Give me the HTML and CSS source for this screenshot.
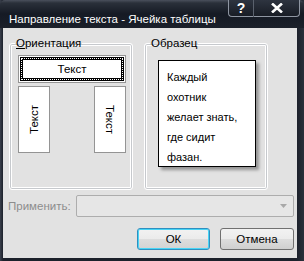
FILE: index.html
```html
<!DOCTYPE html>
<html lang="ru">
<head>
    <meta charset="UTF-8">
    <title>Направление текста - Ячейка таблицы</title>
    <link rel="stylesheet" href="styles.css">
</head>
<body>
    <div class="window">
        <div class="titlebar">
            <span class="title">Направление текста - Ячейка таблицы</span>
            <div class="caption-buttons">
                <div class="cap-btn help">?</div>
                <div class="cap-btn close">
                    <svg width="12" height="10" viewBox="0 0 12 10">
                        <path d="M1 0.5 L11 9.5 M11 0.5 L1 9.5" stroke="#fff" stroke-width="2.6" fill="none"/>
                    </svg>
                </div>
            </div>
        </div>

        <div class="client">
            <div class="groups">
                <fieldset class="group orient">
                    <legend><u>О</u>риентация</legend>
                    <div class="orient-body">
                        <div class="opt-horizontal">
                            <div class="opt-inner">Текст</div>
                        </div>
                        <div class="vertical-row">
                            <div class="opt-vertical up"><span>Текст</span></div>
                            <div class="opt-vertical down"><span>Текст</span></div>
                        </div>
                    </div>
                </fieldset>

                <fieldset class="group sample">
                    <legend>Образец</legend>
                    <div class="sample-box">
                        Каждый<br>охотник<br>желает знать,<br>где сидит<br>фазан.
                    </div>
                </fieldset>
            </div>

            <div class="apply-row">
                <label class="apply-label">Применить:</label>
                <div class="combo">
                    <svg class="combo-arrow" width="7" height="4" viewBox="0 0 7 4">
                        <path d="M0 0 H7 L3.5 4 Z" fill="#a8a8a8"/>
                    </svg>
                </div>
            </div>

            <div class="button-row">
                <button class="btn default">ОК</button>
                <button class="btn">Отмена</button>
            </div>
        </div>
    </div>
</body>
</html>
```

FILE: styles.css
```css
* {
    margin: 0;
    padding: 0;
    box-sizing: border-box;
}

body {
    font-family: 'Liberation Sans', Arial, sans-serif;
    font-size: 11px;
    color: #000;
    background: #1b202a;
}

.window {
    width: 304px;
    height: 261px;
    background: linear-gradient(to right, #3a404c 0, #1c212b 3px, #1c212b 297px, #2a303b 304px);
    display: flex;
    flex-direction: column;
}

.titlebar {
    height: 28px;
    display: flex;
    border-radius: 5px 5px 0 0;
    background: linear-gradient(to bottom, #4a505c 0, #2a303a 3px, #151a24 14px, #1b202a 28px);
}

.title {
    color: #fff;
    font-size: 11.5px;
    padding: 12px 0 0 9px;
    line-height: 14px;
    white-space: nowrap;
}

.caption-buttons {
    display: flex;
    margin-left: auto;
    margin-right: 4px;
    height: 17px;
}

.cap-btn {
    height: 17px;
    border: 1px solid #8f96a2;
    border-top: none;
    background: linear-gradient(to bottom, #2e3440, #181c25);
    color: #fff;
    font-weight: bold;
    font-size: 14px;
    display: flex;
    align-items: center;
    justify-content: center;
}

.help {
    width: 25px;
    border-radius: 0 0 0 4px;
    border-right: none;
}

.close {
    width: 47px;
    border-radius: 0 0 4px 0;
    border-left: 1px solid #5a616d;
}

.client {
    height: 230px;
    margin: 0 7px 0 3px;
    background: #e2e2e2;
    padding: 8px 2px 0 6px;
}

.groups {
    display: flex;
    gap: 11px;
    height: 154px;
}

.group {
    width: 124px;
    height: 154px;
    padding: 0;
    border: 1px solid #fff;
    border-radius: 3px;
    box-shadow: inset 0 0 0 1px #c6c9cd, inset 0 0 0 2px #fff;
}

.group legend {
    margin-left: 5px;
    padding: 0 1px;
    line-height: 14px;
    font-size: 11.5px;
}

.group legend u {
    text-decoration: underline;
}

.orient-body {
    margin: 5px 0 0 8px;
}

.opt-horizontal {
    width: 108px;
    height: 28px;
    border: 1px solid #949494;
    background: #fff;
    padding: 1px;
}

.opt-inner {
    height: 100%;
    border: 3px solid #000;
    outline: 1px dotted #fff;
    outline-offset: -2px;
    display: flex;
    align-items: center;
    justify-content: center;
    font-size: 11.5px;
}

.vertical-row {
    display: flex;
    justify-content: space-between;
    width: 108px;
    margin-top: 3px;
}

.opt-vertical {
    width: 32px;
    height: 67px;
    border: 1px solid #949494;
    background: #fff;
    display: flex;
    align-items: center;
    justify-content: center;
    font-size: 11.5px;
}

.opt-vertical span {
    writing-mode: vertical-rl;
}

.opt-vertical.up span {
    transform: rotate(180deg);
}

.sample-box {
    width: 98px;
    height: 107px;
    margin: 10px 0 0 13px;
    background: #fff;
    border: 1px solid #000;
    box-shadow: 3px 3px 3px rgba(0, 0, 0, 0.35);
    padding: 6px 0 0 8px;
    line-height: 20px;
}

.apply-row {
    display: flex;
    align-items: center;
    margin-top: 5px;
}

.apply-label {
    width: 68px;
    margin-left: -1px;
    color: #8d8d8d;
    font-size: 11.5px;
}

.combo {
    width: 218px;
    height: 22px;
    border: 1px solid #adadad;
    border-radius: 2px;
    background: #e6e6e6;
    display: flex;
    align-items: center;
    justify-content: flex-end;
    padding-right: 6px;
}

.button-row {
    display: flex;
    justify-content: flex-end;
    gap: 10px;
    margin-top: 11px;
    padding-right: 1px;
}

.btn {
    width: 74px;
    height: 22px;
    font-family: 'Liberation Sans', Arial, sans-serif;
    font-size: 11.5px;
    color: #000;
    border: 1px solid #707070;
    border-radius: 3px;
    background: linear-gradient(to bottom, #f2f2f2 0, #ebebeb 50%, #dddddd 51%, #cfcfcf 100%);
}

.btn.default {
    width: 73px;
    border-color: #2f8fc0;
    box-shadow: inset 0 0 0 1px #48d4f5;
    background: linear-gradient(to bottom, #f2f2f2 0, #ebebeb 50%, #dddddd 51%, #d3d3d3 100%);
}
```
